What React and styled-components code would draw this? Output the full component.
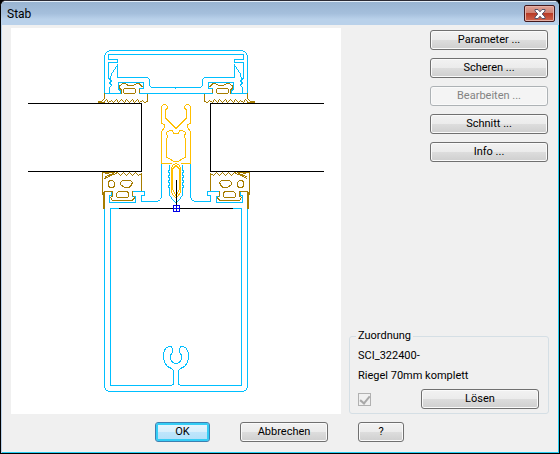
import React,{useState} from 'react';
import styled,{createGlobalStyle} from 'styled-components';

const actions = [
    {id:'parameter',label:'Parameter ...'},
    {id:'scheren',label:'Scheren ...'},
    {id:'bearbeiten',label:'Bearbeiten ...',disabled:true},
    {id:'schnitt',label:'Schnitt ...'},
    {id:'info',label:'Info ...'},
];

// left half of the section, the right half is its mirror image
function HalfSection() {
    return (
        <>
            <g stroke="#00bfff">
                <path d="M176 50.5H110.5L107.5 51.5L105.5 53.5L104.5 56.5V93.5H120.5V90.5L118.5 89.5V82.5H143.5V88.5H139.5V93.5H176" />
                <path d="M176 54.5H108.5V59.5H117.5V62.5H108.5V78L111.5 81L109.5 83L111.5 85L109.5 88V92.5M110.5 79L111.5 74L117.5 65V77.5H147.5L149.5 79.5V85.5L151.5 87.5H176" />
                <path d="M105.5 191.5H111.5V195.5H109.5V202.5H135.5V196.5H132.5V191.5H144.5V195.5H141.5V201.5H157.5L160.5 199.5L161.5 197V163" />
                <path d="M169.5 165V170H168.5V172H169.5V175H168.5V177H169.5V180H168.5V182H169.5V185H168.5V187H169.5V195L172.5 199.5L176 203" />
                <path d="M119 208.5H110.5V385.5H171L173.5 384V370.5L171.5 368.5L167.5 366.5L164.5 362.5L163.5 358V353L165.5 348.5L168.5 346.5H171L172.5 348.5V352.5L170.5 355V359.5L172.5 362L174.5 363.5H176" />
                <path d="M104.5 208V386.5L105.5 389.5L108.5 391.5H176" />
            </g>
            <g stroke="#a67c00">
                <path d="M105 93L104.5 98.5L101.5 101.5H97.5M97.5 102.5H104L106.5 99.5L108.5 102.5L111.5 100.5L113.5 102.5L116.5 99.5L118.5 102.5L121.5 99.5L124.5 102.5L126.5 99.5L129.5 102.5L132.5 99.5L134.5 102.5L137.5 99.5L139.5 102.5L142.5 100.5L144.5 102.5L147.5 101.5V94" />
                <path d="M119.5 88.5V86L122.5 83.5H125L128.5 85.5H133.5L136.5 83.5H139L142.5 87M119.5 88.5L121.5 89.5V93.5M139.5 89V93" />
                <path d="M125 88.5H134.5L135.5 89.5V92.5L134.5 93.5H124.5L123.5 92.5V89.5Z" />
                <path d="M102.5 172V194.5M102 172.5H114L111.5 174.5L105.5 173.5M105 176.5L113.5 174.5L104.5 178.5M114 174.5L117.5 172.5L120.5 175.5L123.5 172.5L126.5 175.5L129.5 172.5L132.5 175.5L135.5 172.5L138.5 175.5L141.5 173.5V191" />
                <path d="M109.5 180.5H112.5L114.5 182.5V186.5L112.5 187.5H109.5L108.5 185.5V182.5Z" />
                <path d="M122.5 180.5H130.5L132.5 182.5L130.5 186.5L128.5 187.5H124.5L120.5 184.5V182.5Z" />
                <path d="M118.5 191.5H127.5L128.5 193.5V196.5L127.5 197.5H117.5L116.5 196.5V193.5Z" />
                <path d="M112.5 191V196L110.5 197.5L112.5 200.5H132L134.5 198L132.5 195V191" />
                <path d="M104 192V209" strokeWidth="2" />
                <path d="M104 191.5H112" />
            </g>
            <g stroke="#ffbf00">
                <path d="M176 128.5L165.5 118V109.5L167.5 108.5V106.5L165.5 104.5H163.5L161.5 106.5V123.5L164.5 124.5V127.5L161.5 131.5V163.5H171.5" />
                <path d="M176 133.5H173.5L172.5 130.5H169.5L166.5 132.5L167.5 136.5L166.5 139.5V157.5L169.5 158.5L173.5 161.5H176" />
                <path d="M176 163.5L172.5 165.5L171.5 169V192L173.5 195.5L176 198" />
                <path d="M176 165.5L172.5 169V189.5L176 195.5" />
            </g>
        </>
    );
}

function ProfileDrawing() {
    return (
        <Drawing viewBox="11 28 330 386" role="img" aria-label="Riegel 70mm komplett">
            <g fill="none" shapeRendering="crispEdges">
                <HalfSection />
                <g transform="translate(352 0) scale(-1 1)">
                    <HalfSection />
                </g>
                <path d="M175 88.5H176" stroke="#00bfff" />
                <path d="M28 103.5H141.5V171.5H28M324 103.5H210.5V171.5H324" stroke="#000000" />
                <path d="M119 208.5H233M176.5 180V205" stroke="#000000" />
                <path d="M173.5 205.5H179.5V211.5H173.5ZM176.5 205V212M173 208.5H180" stroke="#0000e6" />
            </g>
        </Drawing>
    );
}

function App() {
    const [open,setOpen] = useState(true);
    if (!open) {
        return <GlobalStyle />;
    }
    return (
        <>
            <GlobalStyle />
            <Dialog role="dialog" aria-labelledby="dialog-title">
                <TitleBar>
                    <Title id="dialog-title">Stab</Title>
                    <CloseButton type="button" aria-label="Schließen" onClick={()=>setOpen(false)}>
                        <svg width="12" height="10" viewBox="0 0 12 10">
                            <path d="M1 .5H4L6 2.8L8 .5H11V2L8.2 5L11 8V9.5H8L6 7.2L4 9.5H1V8L3.8 5L1 2Z" fill="#ffffff" stroke="#55546a" />
                        </svg>
                    </CloseButton>
                </TitleBar>
                <Content>
                    <Preview>
                        <ProfileDrawing />
                    </Preview>
                    <Side>
                        <Actions>
                            {actions.map((action)=>(
                                <Button key={action.id} type="button" $width={118} disabled={action.disabled}>
                                    {action.label}
                                </Button>
                            ))}
                        </Actions>
                        <Group>
                            <Legend>Zuordnung</Legend>
                            <Line>SCI_322400-</Line>
                            <Line as="label" htmlFor="assigned">Riegel 70mm komplett</Line>
                            <GroupRow>
                                <Checkbox id="assigned" type="checkbox" defaultChecked disabled />
                                <Button type="button" $width={118}>Lösen</Button>
                            </GroupRow>
                        </Group>
                    </Side>
                </Content>
                <Footer>
                    <Button type="button" $width={55} $primary>OK</Button>
                    <Button type="button" $width={88} onClick={()=>setOpen(false)}>Abbrechen</Button>
                    <Button type="button" $width={46}>?</Button>
                </Footer>
            </Dialog>
        </>
    );
}

const GlobalStyle = createGlobalStyle`
    * {
        box-sizing:border-box;
    }
    body {
        margin:0;
        background:#000000;
        color:#000000;
        font-family:Roboto,"Liberation Sans",sans-serif;
        font-size:11px;
        line-height:14px;
    }
    button {
        font:inherit;
        color:inherit;
    }
`;
const Dialog = styled.div`
    display:flex;
    flex-direction:column;
    min-height:100vh;
    background:#f0f0f0;
    border:1px solid #000000;
    border-top-color:#2b2a33;
    border-radius:6px 6px 0 0;
    box-shadow:inset 1px 0 #b9d1ea,inset -1px -1px #27cdf2;
    overflow:hidden;
`;
const TitleBar = styled.header`
    display:flex;
    align-items:center;
    justify-content:space-between;
    height:24px;
    padding:0 4px 0 6px;
    border-top:1px solid #e3edf7;
    background:linear-gradient(#99b4d1,#a5bfdc 50%,#b9d1ea 75%);
`;
const Title = styled.h1`
    margin:0;
    font-size:12px;
    font-weight:normal;
`;
const CloseButton = styled.button`
    display:flex;
    align-items:center;
    justify-content:center;
    width:31px;
    height:17px;
    padding:0;
    border:1px solid #43191d;
    border-radius:2px;
    background:linear-gradient(#e0a297,#cf8374 45%,#b83b26 50%,#d0664f);
    box-shadow:inset 0 0 0 1px #e5b0a6;
`;
const Content = styled.main`
    display:flex;
    flex:1;
    gap:8px;
    padding:3px 10px 0;
`;
const Preview = styled.section`
    flex:1;
    background:#ffffff;
`;
const Drawing = styled.svg`
    display:block;
    width:100%;
`;
const Side = styled.aside`
    display:flex;
    flex-direction:column;
    justify-content:space-between;
    width:200px;
    padding-top:2px;
`;
const Actions = styled.div`
    display:flex;
    flex-direction:column;
    align-items:flex-end;
    gap:8px;
    padding-right:1px;
`;
const Button = styled.button`
    width:${(props)=>props.$width}px;
    height:20px;
    padding:0;
    border:1px solid ${(props)=>props.$primary ? '#3c7fb1' : '#707070'};
    border-radius:3px;
    background:${(props)=>props.$primary
        ? 'linear-gradient(#e9f6fd,#d8effc 50%,#bee6fd 50%,#b2dff8)'
        : 'linear-gradient(#f2f2f2,#ebebeb 50%,#dddddd 50%,#cfcfcf)'};
    box-shadow:${(props)=>props.$primary ? 'inset 0 0 0 2px #35cdf5' : 'inset 0 0 0 1px #fafafa'};
    &:disabled {
        border-color:#adb2b5;
        background:#f4f4f4;
        color:#838383;
    }
`;
const Group = styled.fieldset`
    min-width:0;
    margin:0;
    padding:6px 9px 4px 8px;
    border:1px solid #d5dfe5;
    border-radius:3px;
`;
const Legend = styled.legend`
    padding:0 2px;
    margin-left:-2px;
`;
const Line = styled.p`
    display:block;
    margin:0 0 6px;
`;
const GroupRow = styled.div`
    display:flex;
    align-items:center;
    justify-content:space-between;
`;
const Checkbox = styled.input`
    appearance:none;
    display:grid;
    place-items:center;
    width:13px;
    height:13px;
    margin:0;
    border:1px solid #b1b1b1;
    background:#f0f0f0;
    &:checked::before {
        content:"";
        width:4px;
        height:8px;
        border:solid #a8a8a8;
        border-width:0 2px 2px 0;
        transform:rotate(40deg);
    }
`;
const Footer = styled.footer`
    display:flex;
    gap:30px;
    padding:8px 10px 11px 154px;
`;

export default App;
